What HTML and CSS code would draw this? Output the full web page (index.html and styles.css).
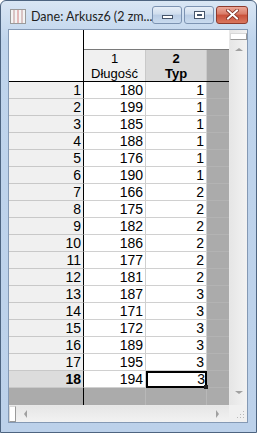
FILE: index.html
```html
<!DOCTYPE html>
<html lang="pl">
<head>
  <meta charset="UTF-8" />
  <title>Dane: Arkusz6</title>
  <link rel="stylesheet" href="styles.css">
</head>
<body>
  <div class="window">
    <div class="titlebar">
      <svg class="app-icon" width="16" height="15" viewBox="0 0 16 15">
        <rect x="0.5" y="0.5" width="15" height="14" fill="#f4f4f4" stroke="#9a9a9a"/>
        <rect x="3" y="1" width="2" height="13" fill="#d9c4c4"/>
        <rect x="7" y="1" width="2" height="13" fill="#e3b9b9"/>
        <rect x="11" y="1" width="2" height="13" fill="#d9c4c4"/>
      </svg>
      <span class="title">Dane: Arkusz6 (2 zm...</span>
      <div class="controls">
        <div class="cbtn"><span class="min-glyph"></span></div>
        <div class="cbtn"><span class="max-glyph"></span></div>
        <div class="cbtn close">
          <svg width="13" height="11" viewBox="0 0 13 11">
            <path d="M2 1.5 L11 9.5 M11 1.5 L2 9.5" stroke="#7a2a20" stroke-width="3.6" stroke-linecap="square"/>
            <path d="M2 1.5 L11 9.5 M11 1.5 L2 9.5" stroke="#ffffff" stroke-width="2" stroke-linecap="square"/>
          </svg>
        </div>
      </div>
    </div>

    <div class="client">
      <div class="upper">
        <div class="sheet">
          <div class="head">
            <div class="corner"></div>
            <div class="head-right">
              <div class="strip"></div>
              <div class="col-heads">
                <div class="ch c1"><span>1</span><span>Długość</span></div>
                <div class="ch c2 sel"><span>2</span><span>Typ</span></div>
                <div class="ch fill"></div>
              </div>
            </div>
          </div>
          <div id="rows"></div>
          <div class="row empty">
            <div class="rh"></div>
            <div class="cell c1"></div>
            <div class="cell c2"></div>
            <div class="cell fill"></div>
          </div>
        </div>
        <div class="vscroll">
          <div class="split-v"></div>
          <span class="arrow up"></span>
          <span class="arrow down"></span>
        </div>
      </div>
      <div class="lower">
        <div class="hscroll">
          <div class="split-h"></div>
          <span class="arrow left"></span>
          <span class="arrow right"></span>
        </div>
        <div class="grip">
          <svg width="10" height="10" viewBox="0 0 10 10">
            <rect x="7" y="1" width="1" height="1" fill="#b8b8b8"/>
            <rect x="4" y="4" width="1" height="1" fill="#b8b8b8"/>
            <rect x="7" y="4" width="1" height="1" fill="#b8b8b8"/>
            <rect x="1" y="7" width="1" height="1" fill="#b8b8b8"/>
            <rect x="4" y="7" width="1" height="1" fill="#b8b8b8"/>
            <rect x="7" y="7" width="1" height="1" fill="#b8b8b8"/>
          </svg>
        </div>
      </div>
    </div>
  </div>

  <script>
    const data = [
      [180, 1], [199, 1], [185, 1], [188, 1], [176, 1], [190, 1],
      [166, 2], [175, 2], [182, 2], [186, 2], [177, 2], [181, 2],
      [187, 3], [171, 3], [172, 3], [189, 3], [195, 3], [194, 3]
    ];

    const rows = document.getElementById("rows");

    data.forEach((d, i) => {
      const last = i === data.length - 1;
      const row = document.createElement("div");
      row.className = "row";
      row.innerHTML = `
        <div class="rh${last ? " sel" : ""}">${i + 1}</div>
        <div class="cell c1">${d[0]}</div>
        <div class="cell c2${last ? " active" : ""}">${d[1]}</div>
        <div class="cell fill"></div>
      `;
      rows.appendChild(row);
    });
  </script>
</body>
</html>
```

FILE: styles.css
```css
* {
  margin: 0;
  padding: 0;
  box-sizing: border-box;
}

body {
  background: #ffffff;
}

.window {
  width: 257px;
  height: 433px;
  border: 1px solid #4d6480;
  border-radius: 6px 6px 0 0;
  background: linear-gradient(#d9e6f4, #bfd4ec 40px, #bcd1ea);
  padding: 0 8px 9px 7px;
  display: flex;
  flex-direction: column;
}

.titlebar {
  height: 28px;
  display: flex;
  align-items: center;
  padding-top: 2px;
}

.app-icon {
  margin-left: 2px;
  margin-right: 5px;
  flex-shrink: 0;
}

.title {
  font-family: Lato, sans-serif;
  font-size: 12.5px;
  color: #1e1e1e;
  white-space: nowrap;
  flex: 1;
}

.controls {
  display: flex;
  gap: 2px;
  margin-top: -3px;
}

.cbtn {
  width: 30px;
  height: 18px;
  border: 1px solid #7c93b2;
  border-radius: 3px;
  background: linear-gradient(#e6eef8, #cfdded 45%, #b9cce4 50%, #c9dbef);
  display: flex;
  align-items: center;
  justify-content: center;
}

.cbtn.close {
  width: 32px;
  border-color: #8e3b2e;
  background: linear-gradient(#eba899, #d97c68 45%, #c9503a 50%, #d9775f);
}

.min-glyph {
  width: 11px;
  height: 4px;
  margin-top: 5px;
  border: 1px solid #45556b;
  background: #ffffff;
}

.max-glyph {
  width: 11px;
  height: 8px;
  border: 1px solid #45556b;
  box-shadow: inset 0 0 0 2px #ffffff;
  background: #45556b;
  background-clip: content-box;
  padding: 2px;
}

.client {
  flex: 1;
  border: 1px solid #8499b4;
  background: #f0f0f0;
  display: flex;
  flex-direction: column;
}

.upper {
  display: flex;
  height: 375px;
}

.sheet {
  width: 220px;
  background: #ffffff;
  font-family: "Liberation Sans", Arial, sans-serif;
  font-size: 14px;
  color: #000000;
}

.head {
  display: flex;
  height: 52px;
  border-bottom: 1px solid #000000;
}

.corner {
  width: 75px;
  border-right: 1px solid #000000;
  background: #ffffff;
}

.head-right {
  flex: 1;
  display: flex;
  flex-direction: column;
}

.strip {
  height: 20px;
  border-bottom: 1px solid #7a7a7a;
}

.col-heads {
  flex: 1;
  display: flex;
}

.ch {
  display: flex;
  flex-direction: column;
  align-items: center;
  justify-content: center;
  font-size: 13px;
  line-height: 15px;
  border-right: 1px solid #c9c9c9;
  background: #f0f0f0;
}

.ch.sel {
  background: #d9d9d9;
  font-weight: bold;
}

.c1 {
  width: 62px;
}

.c2 {
  width: 61px;
}

.fill {
  width: 22px;
  background: #ababab;
  border-right: none;
}

.row {
  display: flex;
  height: 17px;
}

.rh,
.cell {
  height: 17px;
  line-height: 16px;
  text-align: right;
  padding-right: 2px;
  border-bottom: 1px solid #d0d0d0;
}

.rh {
  width: 75px;
  background: #f0f0f0;
  border-right: 1px solid #000000;
  border-bottom-color: #c8c8c8;
}

.rh.sel {
  background: #dcdcdc;
  font-weight: bold;
}

.cell.c1,
.cell.c2 {
  border-right: 1px solid #d0d0d0;
}

.cell.fill {
  background: #ababab;
  border-bottom-color: #b3b3b3;
}

.cell.active {
  position: relative;
  border: 2px solid #000000;
  line-height: 13px;
  padding-right: 0;
}

.cell.active::after {
  content: "";
  position: absolute;
  right: -3px;
  bottom: -3px;
  width: 4px;
  height: 4px;
  background: #202020;
}

.row.empty .rh,
.row.empty .cell {
  background: #ababab;
  border-bottom: none;
}

.row.empty .cell.c1,
.row.empty .cell.c2 {
  border-right-color: #b8b8b8;
}

.vscroll {
  width: 18px;
  position: relative;
  background: linear-gradient(90deg, #e6e6e6, #f2f2f2);
  border-left: 1px solid #e8e8e8;
}

.split-v {
  margin-top: 3px;
  height: 7px;
  border: 1px solid #9a9a9a;
  border-top-color: #d8d8d8;
  border-left-color: #d8d8d8;
  background: #ffffff;
}

.arrow {
  position: absolute;
  width: 0;
  height: 0;
  border: 3px solid transparent;
}

.arrow.up {
  left: 5px;
  top: 15px;
  border-bottom: 3px solid #a0a0a0;
  border-left-width: 4px;
  border-right-width: 4px;
}

.arrow.down {
  left: 5px;
  bottom: 8px;
  border-top: 3px solid #a0a0a0;
  border-left-width: 4px;
  border-right-width: 4px;
}

.lower {
  flex: 1;
  display: flex;
}

.hscroll {
  width: 220px;
  position: relative;
  background: linear-gradient(#e6e6e6, #f2f2f2);
  border-top: 1px solid #e8e8e8;
}

.split-h {
  width: 7px;
  height: 16px;
  border: 1px solid #9a9a9a;
  border-top-color: #d8d8d8;
  border-left-color: #d8d8d8;
  background: #ffffff;
}

.arrow.left {
  left: 12px;
  top: 4px;
  border-right: 3px solid #a0a0a0;
  border-top-width: 4px;
  border-bottom-width: 4px;
}

.arrow.right {
  right: 7px;
  top: 4px;
  border-left: 3px solid #a0a0a0;
  border-top-width: 4px;
  border-bottom-width: 4px;
}

.grip {
  flex: 1;
  display: flex;
  align-items: flex-end;
  justify-content: flex-end;
  padding: 0 1px 2px 0;
}
```
